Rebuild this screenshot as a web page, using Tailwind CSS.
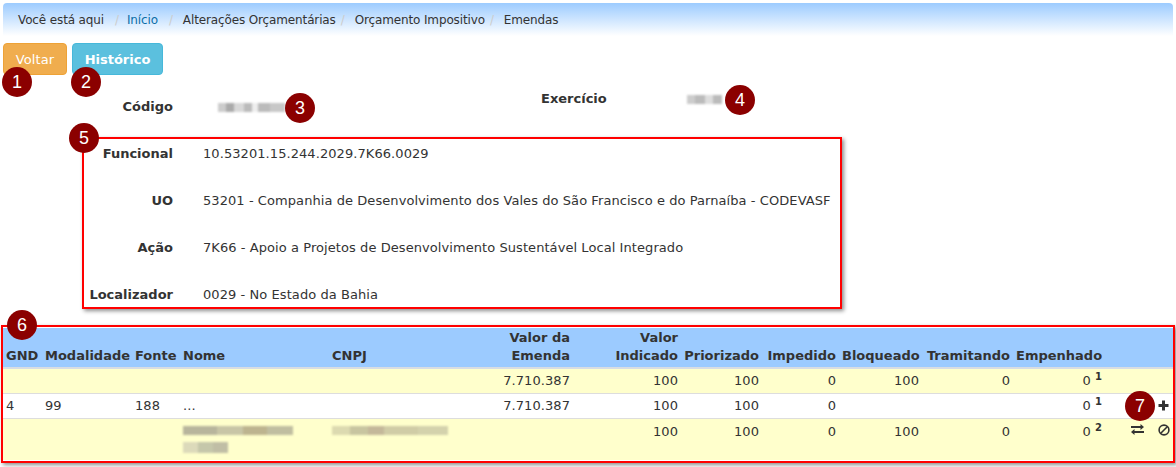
<!DOCTYPE html>
<html>

<head>
    <meta charset="utf-8">
    <title>Emendas</title>
    <script src="https://cdn.jsdelivr.net/npm/@tailwindcss/browser@4"></script>
</head>

<body class="relative h-[467px] w-[1176px] overflow-hidden bg-white font-['DejaVu_Sans',Verdana,sans-serif] text-[13px] tracking-[0.07px] text-[#333]">
    <!-- breadcrumb -->
    <div class="mx-[3px] mt-[3px] flex h-[33px] items-center rounded-t bg-gradient-to-b from-[#9ccbff] to-white pl-[15px] text-[12px] tracking-[-0.13px]">
        <span>Você está aqui</span><span class="ml-[11px] mr-[8px] text-[#ccc]">/</span>
        <a class="text-[#0a6ea8]">Início</a><span class="ml-[11px] mr-[10px] text-[#ccc]">/</span>
        <span>Alterações Orçamentárias</span><span class="ml-[5px] mr-[10px] text-[#ccc]">/</span>
        <span>Orçamento Impositivo</span><span class="ml-[5px] mr-[10px] text-[#ccc]">/</span>
        <span>Emendas</span>
    </div>

    <!-- botoes -->
    <div class="ml-[3px] mt-[7px] flex gap-[5px]">
        <button class="h-[32px] w-[64px] rounded border border-[#eea236] bg-[#f0ad4e] pt-[1px] text-white">Voltar</button>
        <button class="h-[32px] w-[91px] rounded border border-[#46b8da] bg-[#5bc0de] pt-[1px] font-bold tracking-normal text-white">Histórico</button>
    </div>

    <!-- codigo / exercicio -->
    <div class="mt-[14px] flex h-[28px] tracking-normal">
        <div class="flex w-[541px] items-center self-end leading-[20px]">
            <span class="w-[173px] text-right font-bold">Código</span>
            <div class="ml-[45px] flex h-[9px] blur-[1px]">
                <i class="w-[8px] bg-[#ccc]"></i><i class="w-[8px] bg-[#aaa]"></i><i class="w-[10px] bg-[#d8d8d8]"></i><i class="w-[8px] bg-[#bbb]"></i><i class="w-[6px] bg-[#eee]"></i><i class="w-[12px] bg-[#bbb]"></i><i class="w-[15px] bg-[#c8c8c8]"></i>
            </div>
        </div>
        <div class="flex items-start">
            <span class="w-[146px] font-bold leading-[20px]">Exercício</span>
            <div class="mt-[6px] flex h-[9px] blur-[1px]">
                <i class="w-[8px] bg-[#ccc]"></i><i class="w-[10px] bg-[#bbb]"></i><i class="w-[8px] bg-[#ddd]"></i><i class="w-[9px] bg-[#bbb]"></i>
            </div>
        </div>
    </div>

    <!-- dados da emenda -->
    <dl class="mt-[27px] grid grid-cols-[173px_1fr] gap-x-[30px] gap-y-[27px] leading-[20px]">
        <dt class="text-right font-bold tracking-normal">Funcional</dt>
        <dd>10.53201.15.244.2029.7K66.0029</dd>
        <dt class="text-right font-bold tracking-normal">UO</dt>
        <dd>53201 - Companhia de Desenvolvimento dos Vales do São Francisco e do Parnaíba - CODEVASF</dd>
        <dt class="text-right font-bold tracking-normal">Ação</dt>
        <dd>7K66 - Apoio a Projetos de Desenvolvimento Sustentável Local Integrado</dd>
        <dt class="text-right font-bold tracking-normal">Localizador</dt>
        <dd>0029 - No Estado da Bahia</dd>
    </dl>

    <!-- tabela -->
    <table class="absolute left-[3px] top-[328px] w-[1170px] table-fixed border-collapse">
        <colgroup>
            <col class="w-[39px]"><col class="w-[90px]"><col class="w-[48px]"><col class="w-[149px]"><col class="w-[151px]"><col class="w-[93px]"><col class="w-[108px]"><col class="w-[81px]"><col class="w-[77px]"><col class="w-[83px]"><col class="w-[91px]"><col class="w-[92px]"><col>
        </colgroup>
        <thead class="bg-[#9ccbff] font-bold leading-[18px] tracking-normal">
            <tr class="h-[40px] border-b-2 border-[#d8dde3] align-bottom [&>th]:px-[3px] [&>th]:pb-[2px]">
                <th class="text-left">GND</th>
                <th class="text-left">Modalidade</th>
                <th class="text-left">Fonte</th>
                <th class="text-left">Nome</th>
                <th class="text-left">CNPJ</th>
                <th class="text-right">Valor da Emenda</th>
                <th class="text-right">Valor Indicado</th>
                <th class="text-right">Priorizado</th>
                <th class="text-right">Impedido</th>
                <th class="text-right">Bloqueado</th>
                <th class="text-right">Tramitando</th>
                <th class="text-right">Empenhado</th>
                <th></th>
            </tr>
        </thead>
        <tbody class="leading-[20px]">
            <tr class="h-[25px] border-b border-[#ddd] bg-[#ffffcc] [&>td]:px-[3px]">
                <td></td><td></td><td></td><td></td><td></td>
                <td class="text-right">7.710.387</td>
                <td class="text-right">100</td>
                <td class="text-right">100</td>
                <td class="text-right">0</td>
                <td class="text-right">100</td>
                <td class="text-right">0</td>
                <td class="text-right">0 <sup class="text-[10px] font-bold">1</sup></td>
                <td></td>
            </tr>
            <tr class="h-[25px] border-b border-[#ddd] bg-white [&>td]:px-[3px]">
                <td>4</td><td>99</td><td>188</td><td>...</td><td></td>
                <td class="text-right">7.710.387</td>
                <td class="text-right">100</td>
                <td class="text-right">100</td>
                <td class="text-right">0</td>
                <td></td><td></td>
                <td class="text-right">0 <sup class="text-[10px] font-bold">1</sup></td>
                <td>
                    <svg class="ml-auto mr-[1px] h-[11px] w-[11px]" viewBox="0 0 11 11" fill="#333"><path d="M4 .500h3V4h3.500v3H7v3.500H4V7H.500V4H4z"/></svg>
                </td>
            </tr>
            <tr class="h-[42px] bg-[#ffffcc] align-top [&>td]:px-[3px] [&>td]:pt-[3px]">
                <td></td><td></td><td></td>
                <td>
                    <div class="mt-[4px] flex h-[9px] w-[110px] blur-[1px]">
                        <i class="w-[34px] bg-[#b8b59c]"></i><i class="w-[26px] bg-[#c8c5a6]"></i><i class="w-[24px] bg-[#bdb48f]"></i><i class="w-[26px] bg-[#c0bea0]"></i>
                    </div>
                    <div class="mt-[7px] flex h-[11px] w-[45px] blur-[1px]">
                        <i class="w-[15px] bg-[#dcdaba]"></i><i class="w-[15px] bg-[#c5c7aa]"></i><i class="w-[15px] bg-[#c0bea5]"></i>
                    </div>
                </td>
                <td>
                    <div class="mt-[4px] flex h-[9px] w-[116px] blur-[1px]">
                        <i class="w-[18px] bg-[#dcdab0]"></i><i class="w-[18px] bg-[#c8c5a0]"></i><i class="w-[16px] bg-[#c4b89a]"></i><i class="w-[34px] bg-[#d0cca6]"></i><i class="w-[30px] bg-[#d4d2ac]"></i>
                    </div>
                </td>
                <td></td>
                <td class="text-right">100</td>
                <td class="text-right">100</td>
                <td class="text-right">0</td>
                <td class="text-right">100</td>
                <td class="text-right">0</td>
                <td class="text-right">0 <sup class="text-[10px] font-bold">2</sup></td>
                <td>
                    <div class="flex items-center justify-end gap-[14px] pt-[2px]">
                        <svg class="h-[11px] w-[13px]" viewBox="0 0 13 11" fill="#333"><path d="M0 2h9.500V0L13 3 9.500 6V4H0zM13 7v2H3.500v2L0 8l3.500-3v2z"/></svg>
                        <svg class="h-[12px] w-[12px]" viewBox="0 0 12 12" fill="none" stroke="#333" stroke-width="1.600"><circle cx="6" cy="6" r="4.900"/><path d="M2.500 9.500l7-7"/></svg>
                    </div>
                </td>
            </tr>
        </tbody>
    </table>

    <!-- anotacoes por cima da tela -->
    <div class="pointer-events-none absolute left-[82px] top-[137px] h-[172px] w-[760px] border-2 border-[#f00] shadow-[2px_2px_4px_rgba(0,0,0,0.45)]"></div>
    <div class="pointer-events-none absolute left-[1px] top-[325px] h-[138px] w-[1174px] border-2 border-[#f00] shadow-[2px_2px_4px_rgba(0,0,0,0.45)]"></div>

    <div class="absolute left-[2px] top-[67px] flex h-[30px] w-[30px] items-center justify-center rounded-full bg-[#8b0000] font-['Liberation_Sans',sans-serif] text-[18px] text-white">1</div>
    <div class="absolute left-[71px] top-[67px] flex h-[30px] w-[30px] items-center justify-center rounded-full bg-[#8b0000] font-['Liberation_Sans',sans-serif] text-[18px] text-white">2</div>
    <div class="absolute left-[285px] top-[93px] flex h-[30px] w-[30px] items-center justify-center rounded-full bg-[#8b0000] font-['Liberation_Sans',sans-serif] text-[18px] text-white">3</div>
    <div class="absolute left-[725px] top-[85px] flex h-[30px] w-[30px] items-center justify-center rounded-full bg-[#8b0000] font-['Liberation_Sans',sans-serif] text-[18px] text-white">4</div>
    <div class="absolute left-[69px] top-[123px] flex h-[30px] w-[30px] items-center justify-center rounded-full bg-[#8b0000] font-['Liberation_Sans',sans-serif] text-[18px] text-white">5</div>
    <div class="absolute left-[7px] top-[310px] flex h-[30px] w-[30px] items-center justify-center rounded-full bg-[#8b0000] font-['Liberation_Sans',sans-serif] text-[18px] text-white">6</div>
    <div class="absolute left-[1125px] top-[391px] flex h-[30px] w-[30px] items-center justify-center rounded-full bg-[#8b0000] font-['Liberation_Sans',sans-serif] text-[18px] text-white">7</div>
</body>

</html>
